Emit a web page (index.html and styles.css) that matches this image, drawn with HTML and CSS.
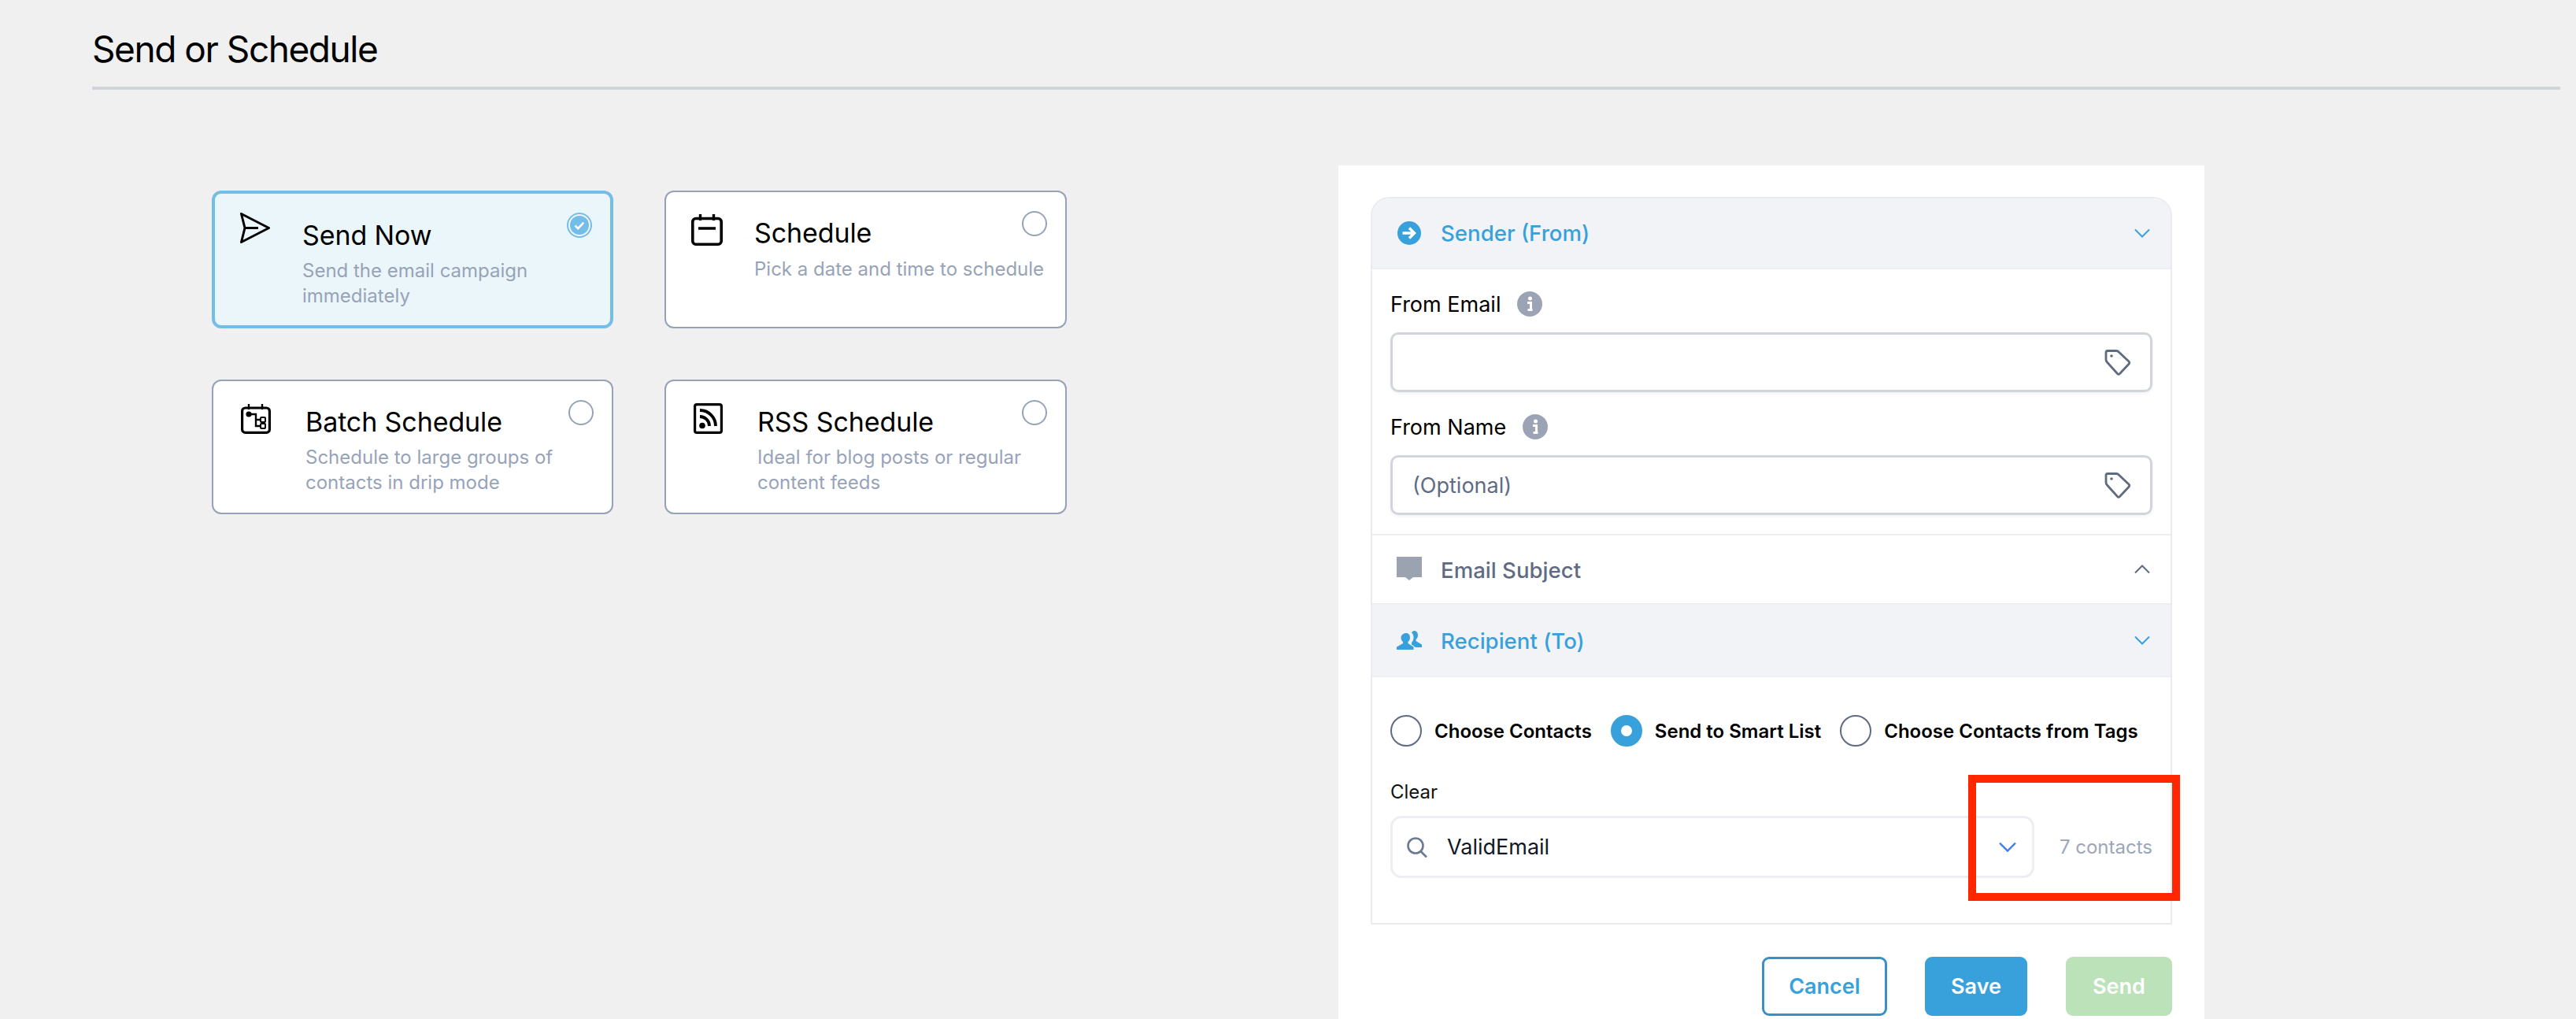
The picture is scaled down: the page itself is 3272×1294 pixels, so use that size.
FILE: index.html
```html
<!DOCTYPE html>
<html lang="en">
<head>
<meta charset="utf-8">
<title>Send or Schedule</title>
<link rel="stylesheet" href="styles.css">
</head>
<body>
<header class="page-head"><h1>Send or Schedule</h1></header>
<main class="main">
  <section class="options">
    <div class="card card-now">
      <svg class="card-icon" width="38" height="39" viewBox="0 0 38 39"><path d="M1.5 1.5L36.5 19.5L1.5 37.5L6 19.5ZM6 19.5H23" fill="none" stroke="#000" stroke-width="3" stroke-linejoin="round"/></svg>
      <div class="card-text">
        <div class="card-title">Send Now</div>
        <div class="card-desc">Send the email campaign<br>immediately</div>
      </div>
      <svg class="card-radio" width="32" height="32" viewBox="0 0 32 32"><circle cx="16" cy="16" r="15" fill="none" stroke="#74bde8" stroke-width="2"/><circle cx="16" cy="16" r="12" fill="#74bde8"/><path d="M10.5 16.5l3.8 3.6 7-7.4" fill="none" stroke="#fff" stroke-width="2.6"/></svg>
    </div>
    <div class="card card-sched">
      <svg class="card-icon" width="40" height="40" viewBox="0 0 40 40"><rect x="1.8" y="5.5" width="36.4" height="32.7" rx="4" fill="none" stroke="#000" stroke-width="3.6"/><path d="M11.5 0v8M28.5 0v8M9 18h22" fill="none" stroke="#000" stroke-width="3.4"/></svg>
      <div class="card-text">
        <div class="card-title">Schedule</div>
        <div class="card-desc">Pick a date and time to schedule</div>
      </div>
      <span class="card-radio radio-off"></span>
    </div>
    <div class="card card-batch">
      <svg class="card-icon" width="38" height="38" viewBox="0 0 38 38"><rect x="1.6" y="5" width="34.8" height="31.4" rx="4" fill="none" stroke="#000" stroke-width="3.2"/><path d="M10 0v7M27 0v7" stroke="#000" stroke-width="2.4"/><circle cx="10" cy="13" r="3.6" fill="#000"/><path d="M13 13h6v15h6M19 20h6" fill="none" stroke="#000" stroke-width="2.4"/><rect x="25" y="17" width="6" height="6" rx="1" fill="none" stroke="#000" stroke-width="2"/><rect x="25" y="25" width="6" height="6" rx="1" fill="none" stroke="#000" stroke-width="2"/></svg>
      <div class="card-text">
        <div class="card-title">Batch Schedule</div>
        <div class="card-desc">Schedule to large groups of<br>contacts in drip mode</div>
      </div>
      <span class="card-radio radio-off"></span>
    </div>
    <div class="card card-rss">
      <svg class="card-icon" width="37" height="39" viewBox="0 0 37 39"><rect x="1.6" y="1.6" width="33.8" height="35.8" rx="2.5" fill="none" stroke="#000" stroke-width="3.2"/><circle cx="11" cy="28.5" r="3.8" fill="#000"/><path d="M8 18c6.500 0 12 5 12 12M8 10c11 0 20 9 20 20" fill="none" stroke="#000" stroke-width="3.8" transform="translate(0 -1)"/></svg>
      <div class="card-text">
        <div class="card-title">RSS Schedule</div>
        <div class="card-desc">Ideal for blog posts or regular<br>content feeds</div>
      </div>
      <span class="card-radio radio-off"></span>
    </div>
  </section>

  <section class="panel">
    <div class="box">
      <div class="sec-head sec-active sec-first">
        <svg class="sec-icon" width="32" height="32" viewBox="0 0 32 32"><circle cx="16" cy="16" r="15" fill="#38a1dc"/><path d="M7.500 16h15M16 9.500l6.500 6.500-6.500 6.500" fill="none" stroke="#fff" stroke-width="3.400"/></svg>
        <span class="sec-title">Sender (From)</span>
        <svg class="chev" width="20" height="12" viewBox="0 0 20 12"><path d="M1 1.500l9 9 9-9" fill="none" stroke="#38a1dc" stroke-width="2"/></svg>
      </div>
      <div class="sec-body">
        <div class="field-label">From Email
          <svg width="32" height="32" viewBox="0 0 32 32"><circle cx="16" cy="16" r="16" fill="#9ca3b4"/><circle cx="16.500" cy="9" r="2.500" fill="#fff"/><path d="M13 14.500h4.500v8.500M13.500 23.500h6" fill="none" stroke="#fff" stroke-width="3"/></svg>
        </div>
        <div class="input">
          <span class="input-text"></span>
          <svg width="34" height="34" viewBox="0 0 34 34"><path d="M4 2.500h11q2 0 3.300 1.500l12.700 12q1.500 1.500 0 3.300L19.500 31.500q-1.500 1.500-3 0L3.500 17q-1.500-1.500-1.500-3.500V4.500q0-2 2-2z" fill="none" stroke="#5f6b80" stroke-width="2.800"/><circle cx="9" cy="9" r="1.800" fill="#5f6b80"/></svg>
        </div>
        <div class="field-label label-second">From Name
          <svg width="32" height="32" viewBox="0 0 32 32"><circle cx="16" cy="16" r="16" fill="#9ca3b4"/><circle cx="16.500" cy="9" r="2.500" fill="#fff"/><path d="M13 14.500h4.500v8.500M13.500 23.500h6" fill="none" stroke="#fff" stroke-width="3"/></svg>
        </div>
        <div class="input">
          <span class="input-text">(Optional)</span>
          <svg width="34" height="34" viewBox="0 0 34 34"><path d="M4 2.500h11q2 0 3.300 1.500l12.700 12q1.500 1.500 0 3.300L19.500 31.500q-1.500 1.500-3 0L3.500 17q-1.500-1.500-1.500-3.500V4.500q0-2 2-2z" fill="none" stroke="#5f6b80" stroke-width="2.800"/><circle cx="9" cy="9" r="1.800" fill="#5f6b80"/></svg>
        </div>
      </div>
      <div class="sec-head sec-subject">
        <svg class="sec-icon" width="32" height="32" viewBox="0 0 32 32"><path d="M0 0h32v26H21l-5 4-5-4H0z" fill="#9ca3b0"/></svg>
        <span class="sec-title">Email Subject</span>
        <svg class="chev" width="20" height="12" viewBox="0 0 20 12"><path d="M1 10.500l9-9 9 9" fill="none" stroke="#5f6b85" stroke-width="2"/></svg>
      </div>
      <div class="sec-head sec-active">
        <svg class="sec-icon" width="32" height="24" viewBox="0 0 32 24"><path d="M12 3c3.500 0 5 2.500 5 5.500 0 2.500-1 4.500-2.500 5.500v2l7 4.500V24H0v-3.500L8 16v-2c-1.500-1-2.500-3-2.500-5.500C5.500 5.500 8.500 3 12 3z" fill="#38a1dc"/><path d="M22 0c3.500 0 5 2.500 5 5.500 0 2.500-1 4.500-2.500 5.500v2l7.500 4.500V21h-8l-5-3.500V15c1.500-1.500 2.500-3.500 2.500-6.500 0-3-1-5-2.500-6C20 1 21 0 22 0z" fill="#38a1dc"/></svg>
        <span class="sec-title">Recipient (To)</span>
        <svg class="chev" width="20" height="12" viewBox="0 0 20 12"><path d="M1 1.500l9 9 9-9" fill="none" stroke="#38a1dc" stroke-width="2"/></svg>
      </div>
      <div class="recipient">
        <div class="choices">
          <label class="choice"><span class="dot"></span>Choose Contacts</label>
          <label class="choice"><span class="dot dot-on"></span>Send to Smart List</label>
          <label class="choice"><span class="dot"></span>Choose Contacts from Tags</label>
        </div>
        <div class="clear">Clear</div>
        <div class="select-row">
          <div class="select">
            <svg width="26" height="26" viewBox="0 0 26 26"><circle cx="11" cy="11" r="9.500" fill="none" stroke="#6b7a90" stroke-width="2.600"/><path d="M17.500 18l7.500 7.500" stroke="#6b7a90" stroke-width="2.600"/></svg>
            <span class="select-value">ValidEmail</span>
            <svg class="select-chev" width="22" height="13" viewBox="0 0 22 13"><path d="M1 1.500l10 10 10-10" fill="none" stroke="#3b7cf0" stroke-width="2.400"/></svg>
          </div>
          <span class="count">7 contacts</span>
        </div>
        <div class="highlight"></div>
      </div>
    </div>
    <div class="actions">
      <button class="btn btn-cancel">Cancel</button>
      <button class="btn btn-save">Save</button>
      <button class="btn btn-send">Send</button>
    </div>
  </section>
</main>
</body>
</html>
```
FILE: styles.css
```css
* { box-sizing: border-box; }
html, body { margin: 0; height: 1294px; overflow: hidden; }
body { background: #f0f0f0; font-family: Inter, "Liberation Sans", sans-serif; color: #000; }

.page-head { margin: 0 20px 0 117px; height: 114px; border-bottom: 4px solid #d1d5db; padding-top: 34px; }
.page-head h1 { margin: 0; font-size: 46px; line-height: 56px; font-weight: 400; letter-spacing: -1.45px; }

.main { display: flex; align-items: flex-start; padding: 96px 0 0 269px; }

.options { display: grid; grid-template-columns: 510px 511px; grid-template-rows: 175px 171px; gap: 65px; margin-top: 32px; margin-right: 345px; }
.card { position: relative; display: flex; align-items: flex-start; background: #fff; border: 2px solid #94a3b8; border-radius: 12px; }
.card-icon { flex: none; display: block; }
.card-title { font-size: 34px; line-height: 44px; white-space: nowrap; letter-spacing: -0.1px; }
.card-desc { font-size: 24px; line-height: 32px; color: #97a3b8; white-space: nowrap; margin-top: 7px; }
.card-radio { position: absolute; top: 24px; right: 23px; width: 32px; height: 32px; }
.radio-off { border: 2px solid #94a3b8; border-radius: 50%; background: #fff; }

.card-now { background: #ebf6fb; border: 4px solid #74bde8; padding: 24px 0 0 32px; }
.card-now .card-text { margin: 7px 0 0 41px; }
.card-now .card-radio { top: 24px; right: 23px; }
.card-sched { padding: 28px 0 0 32px; }
.card-sched .card-text { margin: 2px 0 0 40px; }
.card-sched .card-desc { margin-top: 8px; }
.card-batch { padding: 29px 0 0 35px; }
.card-batch .card-text { margin: 1px 0 0 44px; }
.card-rss { padding: 28px 0 0 35px; }
.card-rss .card-text { margin: 2px 0 0 44px; }

.panel { width: 1100px; height: 1084px; background: #fff; padding: 40px 41px 0 41px; }
.box { border: 2px solid #e9ebf0; border-radius: 24px 24px 0 0; }

.sec-head { display: flex; align-items: center; height: 88px; padding: 0 26px 0 31px; border-bottom: 2px solid #eceef3; }
.sec-active { height: 92px; background: #f1f3f7; }
.sec-first { height: 90px; border-radius: 22px 22px 0 0; }
.sec-icon { flex: none; }
.sec-title { margin-left: 24px; font-size: 27.600px; font-weight: 500; color: #38a1dc; }
.sec-subject .sec-title { color: #5f6b85; padding-top: 2px; }
.sec-subject + .sec-active .sec-title { padding-top: 2px; }
.chev { margin-left: auto; }

.sec-body { padding: 24px 23px 24px 23px; border-bottom: 2px solid #eceef3; }
.field-label { display: flex; align-items: center; gap: 21px; height: 40px; font-size: 27px; margin-bottom: 16px; }
.label-second { margin-top: 24px; }
.input { display: flex; align-items: center; justify-content: space-between; height: 76px; padding: 0 24px 0 25px; border: 3px solid #d1d5db; border-radius: 10px; box-shadow: 0 2px 4px rgba(0,0,0,.05); }
.input-text { font-size: 27px; color: #5f6b85; }

.recipient { position: relative; height: 312px; padding: 48px 23px 0 23px; }
.choices { display: flex; height: 40px; gap: 24px; }
.choice { display: flex; align-items: center; gap: 16px; font-size: 24px; font-weight: 600; white-space: nowrap; }
.dot { width: 40px; height: 40px; border: 2px solid #5f6b85; border-radius: 50%; background: #fff; }
.dot-on { border: 13.500px solid #38a1dc; }
.clear { margin-top: 42px; font-size: 24px; line-height: 32px; color: #111; }
.select-row { display: flex; align-items: center; margin-top: 14px; }
.select { display: flex; align-items: center; width: 818px; height: 79px; padding: 0 20px 0 18px; border: 3px solid #eceef2; border-radius: 14px; }
.select-value { margin-left: 25px; font-size: 27px; color: #111827; }
.select-chev { margin-left: auto; }
.count { margin-left: 32px; font-size: 24px; color: #9ca6ba; white-space: nowrap; }
.highlight { position: absolute; left: 757px; top: 124px; width: 269px; height: 160px; border: 10px solid #ff2600; }

.actions { display: flex; justify-content: flex-end; gap: 48px; margin-top: 41px; }
.btn { height: 75px; border: 0; border-radius: 9px; font: 600 27px Inter, "Liberation Sans", sans-serif; color: #fff; padding: 0; }
.btn-cancel { width: 159px; background: #fff; border: 3px solid #3a90c4; color: #38a1dc; }
.btn-save { width: 130px; background: #38a1dc; }
.btn-send { width: 135px; background: #bbe2b8; margin-left: 1px; }
```
